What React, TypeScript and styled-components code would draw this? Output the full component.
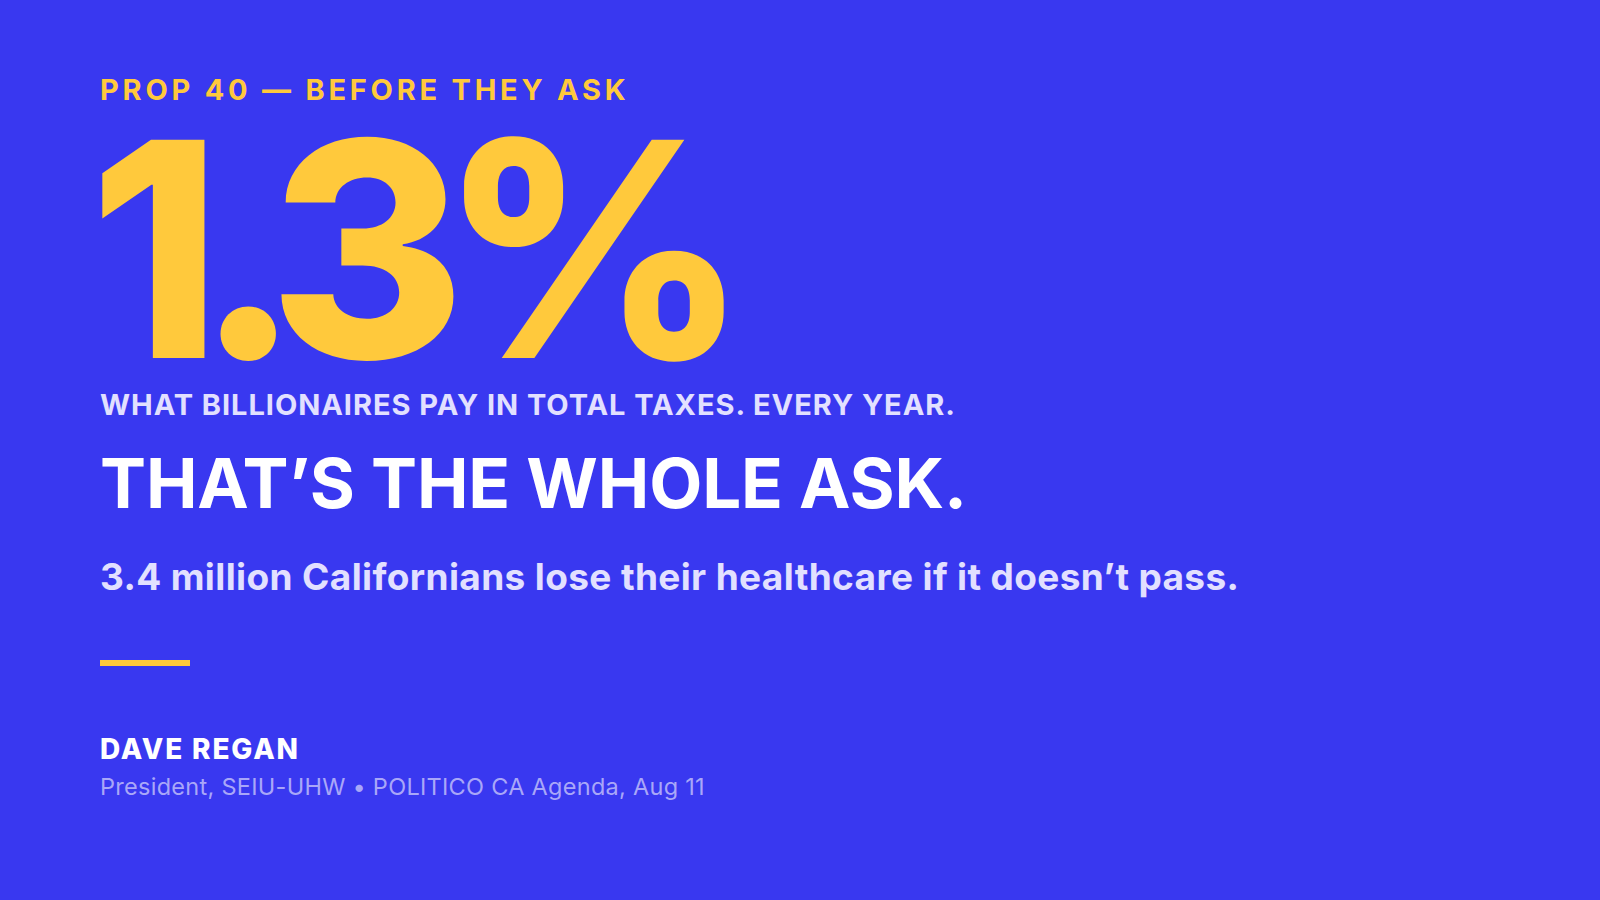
import React from "react";
import styled, { createGlobalStyle } from "styled-components";

const Global = createGlobalStyle`
  html, body { margin: 0; padding: 0; }
  body {
    background: #3938f0;
    font-family: Inter, "Noto Sans", "Liberation Sans", sans-serif;
    -webkit-font-smoothing: antialiased;
  }
  #root { min-height: 100vh; }
`;

const Slide = styled.main`
  width: 1600px;
  height: 900px;
  box-sizing: border-box;
  padding: 75px 0 0 100px;
  background: #3938f0;
  display: flex;
  flex-direction: column;
  align-items: flex-start;
  overflow: hidden;
`;

const Eyebrow = styled.div`
  font-size: 29px;
  line-height: 1;
  font-weight: 700;
  letter-spacing: 0.13em;
  color: #ffc93c;
  text-transform: uppercase;
  white-space: nowrap;
`;

const BigStat = styled.div`
  margin-top: 31px;
  margin-left: -11px;
  font-size: 300px;
  line-height: 0.76;
  font-weight: 800;
  letter-spacing: -0.087em;
  color: #ffc93c;
  white-space: nowrap;
`;

const Subline = styled.div`
  margin-top: 27px;
  font-size: 29px;
  line-height: 1;
  font-weight: 700;
  letter-spacing: 0.033em;
  color: #e2e0ff;
  white-space: nowrap;
`;

const Headline = styled.h1`
  margin: 30px 0 0;
  font-size: 69px;
  line-height: 1;
  font-weight: 700;
  letter-spacing: -0.002em;
  color: #ffffff;
  white-space: nowrap;
`;

const Body = styled.p`
  margin: 40px 0 0;
  font-size: 37px;
  line-height: 1;
  font-weight: 650;
  letter-spacing: 0.01em;
  color: #e2e0ff;
  white-space: nowrap;
`;

const Rule = styled.div`
  margin-top: 65px;
  width: 90px;
  height: 6px;
  background: #ffc93c;
`;

const Name = styled.div`
  margin-top: 69px;
  font-size: 28px;
  line-height: 1;
  font-weight: 800;
  letter-spacing: 0.065em;
  color: #ffffff;
  white-space: nowrap;
`;

const Caption = styled.div`
  margin-top: 12px;
  font-size: 23.5px;
  line-height: 1;
  font-weight: 400;
  letter-spacing: 0.012em;
  color: #a9a7f8;
  white-space: nowrap;
`;

export default function App() {
  return (
    <>
      <Global />
      <Slide>
        <Eyebrow>Prop 40 — Before they ask</Eyebrow>
        <BigStat>1.3%</BigStat>
        <Subline>WHAT BILLIONAIRES PAY IN TOTAL TAXES. EVERY YEAR.</Subline>
        <Headline>THAT’S THE WHOLE ASK.</Headline>
        <Body>3.4 million Californians lose their healthcare if it doesn’t pass.</Body>
        <Rule />
        <Name>DAVE REGAN</Name>
        <Caption>President, SEIU-UHW • POLITICO CA Agenda, Aug 11</Caption>
      </Slide>
    </>
  );
}
